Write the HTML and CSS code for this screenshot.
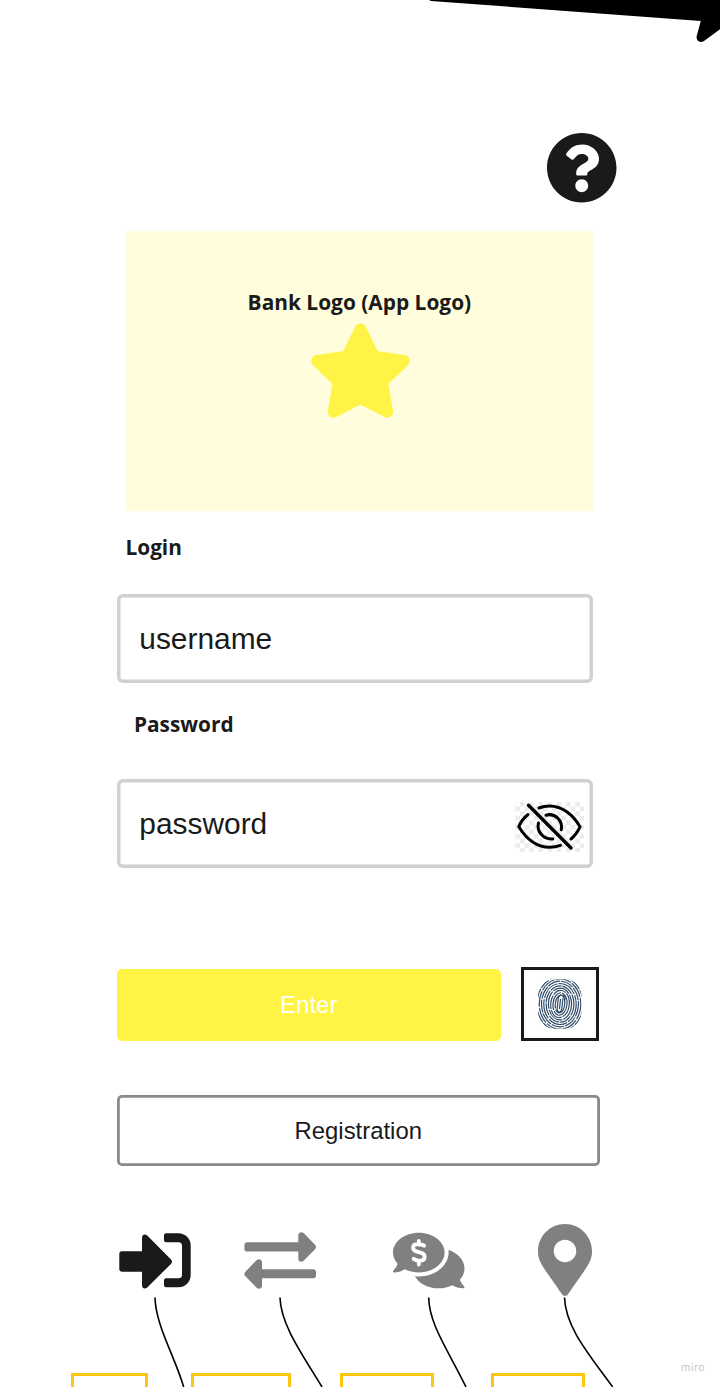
FILE: index.html
```html
<!DOCTYPE html>
<html lang="en">
<head>
<meta charset="utf-8">
<title>Bank login</title>
<link rel="stylesheet" href="styles.css">
</head>
<body>
<div class="board">
  <svg class="big-arrow" viewBox="420 0 300 50" width="300" height="50"><path d="M429 0L431 1L700.8 21L696.7 36C695.8 41 700 43.5 704 41L720 29.3V0Z"/></svg>

  <main class="screen">
    <svg class="help" viewBox="8 8 496 496" width="69.5" height="69.5"><path d="M504 256c0 136.997-111.043 248-248 248S8 392.997 8 256C8 119.083 119.043 8 256 8s248 111.083 248 248zM262.655 90c-54.497 0-89.255 22.957-116.549 63.758-3.536 5.286-2.353 12.415 2.715 16.258l34.699 26.31c5.205 3.947 12.621 3.008 16.665-2.122 17.864-22.658 30.113-35.797 57.303-35.797 20.429 0 45.698 13.148 45.698 32.958 0 14.976-12.363 22.667-32.534 33.976C247.128 238.528 216 254.941 216 296v4c0 6.627 5.373 12 12 12h56c6.627 0 12-5.373 12-12v-1.333c0-28.462 83.186-29.647 83.186-106.667 0-58.002-60.165-102-116.531-102zM256 338c-25.365 0-46 20.635-46 46 0 25.364 20.635 46 46 46s46-20.636 46-46c0-25.365-20.635-46-46-46z"/></svg>

    <section class="logo">
      <h1 class="logo-title">Bank Logo (App Logo)</h1>
      <svg class="star" viewBox="3 -3 576 512" width="106" height="94.2"><path d="M259.3 17.8L194 150.2 47.9 171.5c-26.2 3.8-36.7 36.1-17.7 54.6l105.7 103-25 145.5c-4.5 26.3 23.2 46 46.4 33.7L288 439.6l130.7 68.7c23.2 12.2 50.9-7.4 46.4-33.7l-25-145.5 105.7-103c19-18.5 8.5-50.8-17.7-54.6L382 150.2 316.7 17.8c-11.7-23.6-45.6-23.9-57.4 0z"/></svg>
    </section>

    <div class="label label-login">Login</div>
    <div class="field"><span>username</span></div>
    <div class="label label-password">Password</div>
    <div class="field field-password">
      <span>password</span>
      <svg class="eye" viewBox="515 802 69 50" width="69" height="50">
        <defs><pattern id="checks" x="515.4" y="802" width="9.2" height="9.2" patternUnits="userSpaceOnUse"><path d="M4.6 0h4.6v4.6H4.6zM0 4.6h4.6v4.6H0z" fill="#ececec"/></pattern></defs>
        <rect x="515" y="802" width="69" height="50" fill="url(#checks)"/>
        <g fill="none" stroke="#000" stroke-width="3" stroke-linecap="round">
          <path d="M528 814.5C523.5 818 520.5 822 518.8 826.8C527 840 538 847.3 549.5 847.3C553.5 847.3 557.5 846.6 560.5 845.4"/>
          <path d="M539 808C542.5 806.6 546 806 549.5 806C562 806 573 814.5 580 826.8C577.5 832 574.5 836 571 839"/>
          <path d="M538.4 823C536.5 832 543.5 839.5 552.8 838.9"/>
          <path d="M546 815.2C554.5 812.6 563 820.3 561.3 829.8"/>
          <path d="M528.5 805.3L571 848" stroke-width="3.4"/>
        </g>
      </svg>
    </div>

    <div class="actions">
      <div class="enter">Enter</div>
      <div class="finger">
        <svg viewBox="-22 -25 44 50" width="44" height="50">
          <defs><clipPath id="pad"><rect x="-22" y="-24.7" width="43.5" height="49.5" rx="16" ry="17"/></clipPath></defs>
          <g clip-path="url(#pad)" fill="none" stroke="#2d4a66" stroke-width="1.2">
            <g transform="rotate(6)">
              <path d="M0-5V5M2.3-6V4C2.3 9-2.3 9-2.3 5V-5C-2.3-10 4.6-11 4.6-5"/>
              <ellipse rx="4.7" ry="9" stroke-dasharray="16 1"/>
              <ellipse rx="7" ry="11.3" stroke-dasharray="21 1.2"/>
              <ellipse rx="9.3" ry="13.6" stroke-dasharray="14 1"/>
            </g>
            <ellipse rx="11.6" ry="15.9" stroke-dasharray="18 1.2"/>
            <ellipse rx="13.9" ry="18.2" stroke-dasharray="12 1"/>
            <ellipse rx="16.2" ry="20.5" stroke-dasharray="20 1.2"/>
            <ellipse rx="18.5" ry="22.8" stroke-dasharray="13 1"/>
            <ellipse rx="20.8" ry="25.1" stroke-dasharray="16 1.2"/>
            <ellipse rx="23.1" ry="27.4" stroke-dasharray="11 1"/>
          </g>
        </svg>
      </div>
    </div>
    <div class="register">Registration</div>

    <nav class="tabs">
      <svg class="tab-in" viewBox="119 1224 72 73" width="72" height="73">
        <path d="M122 1251.3H142V1238C142 1234.3 145 1233.3 147.5 1235.8L171 1259.5Q173 1261.7 171 1263.9L147.5 1287.2C145 1289.7 142 1288.7 142 1285V1271.7H122Q119.3 1271.7 119.3 1269V1254Q119.3 1251.3 122 1251.3Z"/>
        <path d="M166 1233.3H178.5A12.2 12.2 0 0 1 190.7 1245.5V1275A12.2 12.2 0 0 1 178.5 1287.2H166Q164 1287.2 164 1285.2V1280.3Q164 1278.3 166 1278.3H178.5Q182 1278.3 182 1274.8V1245.7Q182 1242.2 178.5 1242.2H166Q164 1242.2 164 1240.2V1235.3Q164 1233.3 166 1233.3Z"/>
      </svg>
      <svg class="tab-swap" viewBox="244 1224 73 73" width="73" height="73">
        <path d="M247.3 1242.3H298.3V1235.5C298.3 1232.3 301.5 1231 303.9 1233.3L315 1244.7Q317.2 1247 315 1249.3L303.9 1260.6C301.5 1263 298.3 1261.7 298.3 1258.5V1251.6H247.3Q244.4 1251.6 244.4 1248.7V1245.2Q244.4 1242.3 247.3 1242.3Z"/>
        <path d="M313.2 1269.3H262V1262.5C262 1259.3 258.8 1258 256.5 1260.3L245.4 1271.7Q243.3 1274 245.4 1276.3L256.5 1287.5C258.8 1290 262 1288.7 262 1285.5V1278.3H313.2Q316 1278.3 316 1275.5V1272.1Q316 1269.3 313.2 1269.3Z"/>
      </svg>
      <svg class="tab-chat" viewBox="0 -36 576 584" width="71.5" height="73">
        <path d="M416 192c0-88.4-93.1-160-208-160S0 103.6 0 192c0 34.3 14.1 65.9 38 92-13.4 30.2-35.5 54.2-35.8 54.5-2.2 2.3-2.8 5.7-1.5 8.7S4.8 352 8 352c36.6 0 66.9-12.3 88.7-25 32.2 15.7 70.3 25 111.3 25 114.9 0 208-71.6 208-160zm122 220c23.9-26 38-57.7 38-92 0-66.9-53.5-124.2-129.3-148.1.9 6.6 1.3 13.3 1.3 20.1 0 105.9-107.7 192-240 192-10.8 0-21.3-.8-31.7-1.9C207.8 439.6 281.8 480 368 480c41 0 79.1-9.2 111.3-25 21.8 12.7 52.1 25 88.7 25 3.2 0 6.1-1.9 7.3-4.8 1.3-2.9.7-6.3-1.5-8.7-.3-.2-22.4-24.2-35.8-54.5z"/>
        <path class="dollar" d="M208 98V127M208 259V288M251 136C238 127 224 125 208 125H194C154 125 151 171 187 182L228 194C267 206 262 257 222 257H207C190 257 178 252 166 243"/>
      </svg>
      <svg class="tab-pin" viewBox="0 0 384 512" width="54" height="72"><path d="M172.268 501.67C26.97 291.031 0 269.413 0 192 0 85.961 85.961 0 192 0s192 85.961 192 192c0 77.413-26.97 99.031-172.268 309.67-9.535 13.774-29.93 13.773-39.464 0zM192 272c44.183 0 80-35.817 80-80s-35.817-80-80-80-80 35.817-80 80 35.817 80 80 80z"/></svg>
    </nav>
  </main>

  <div class="notes">
    <div class="note note-in"></div>
    <div class="note note-swap"></div>
    <div class="note note-chat"></div>
    <div class="note note-pin"></div>
  </div>

  <svg class="links" viewBox="0 1290 720 97" width="720" height="97">
    <path d="M155 1297.5C155.5 1325 175 1357 183.7 1387"/>
    <path d="M280 1297.5C280.5 1324 302 1354 322 1387"/>
    <path d="M428.7 1297.5C429 1324 448 1350 466 1387"/>
    <path d="M564.5 1297.5C565.5 1327 588 1353 612.7 1387"/>
  </svg>
  <div class="brand">miro</div>
</div>
</body>
</html>
```
FILE: styles.css
```css
* { box-sizing: border-box; }
body { margin: 0; background: #fff; }
svg { display: block; flex: none; overflow: visible; }

.board {
  position: relative;
  display: flex;
  flex-direction: column;
  width: 720px;
  height: 1387px;
  overflow: hidden;
  color: #1a1a1a;
  font-family: "Liberation Sans", Arial, sans-serif;
}
.big-arrow { position: absolute; top: 0; right: 0; }

.screen {
  display: flex;
  flex-direction: column;
  height: 1373px;
  flex: none;
  padding: 133px 120px 0 117px;
}
.help { margin-left: 429.6px; fill: #1a1a1a; }

.logo {
  display: flex;
  flex-direction: column;
  align-items: center;
  width: 468px;
  height: 280px;
  margin: 28.9px 0 0 8.4px;
  padding-top: 57px;
  background: #fffddb;
}
.logo-title {
  margin: 0;
  font: bold 20.9px/28px "Open Sans", sans-serif;
  white-space: nowrap;
}
.star { margin: 7px 0 0 2.4px; fill: #fff445; }

.label { font: bold 20.8px/28px "Open Sans", sans-serif; }
.label-login { margin: 21.5px 0 0 8.5px; }
.label-password { margin: 27px 0 0 17px; }

.field {
  display: flex;
  align-items: center;
  flex: none;
  width: 476px;
  height: 89px;
  margin-top: 33.5px;
  padding: 0 9.5px 0 22.3px;
  border-radius: 6px;
  box-shadow: inset 0 0 0 3.5px #d0d0d0;
  font-size: 29.9px;
}
.field-password { justify-content: space-between; margin-top: 40.6px; padding-top: 1px; }
.eye { margin-top: 6px; }

.actions { display: flex; justify-content: space-between; margin-top: 99px; width: 482px; height: 74px; }
.enter {
  display: flex;
  align-items: center;
  justify-content: center;
  width: 383.5px;
  height: 72px;
  margin-top: 2px;
  border-radius: 5px;
  background: #fff445;
  color: #fff;
  font-size: 24px;
}
.finger {
  display: flex;
  align-items: center;
  justify-content: center;
  width: 78px;
  height: 74px;
  padding-right: 1px;
  border: 3px solid #1a1a1a;
}
.register {
  display: flex;
  align-items: center;
  justify-content: center;
  flex: none;
  width: 482.5px;
  height: 71px;
  margin-top: 54px;
  padding-top: 1px;
  border-radius: 5px;
  box-shadow: inset 0 0 0 2.8px #8a8a8a;
  font-size: 23.9px;
}

.tabs { display: flex; margin: 57.8px 0 0 2px; fill: #808080; }
.tab-in { fill: #1a1a1a; }
.tab-swap { margin-left: 53px; }
.tab-chat { margin-left: 76px; }
.tab-pin { margin-left: 73px; }
.dollar { fill: none; stroke: #fff; stroke-width: 31; stroke-linecap: round; stroke-linejoin: round; }

.notes { display: flex; flex: none; height: 14px; padding-left: 70.5px; }
.note { flex: none; border: 3px solid #fac710; border-bottom: 0; }
.note-in { width: 77.5px; }
.note-swap { width: 100.5px; margin-left: 42.5px; }
.note-chat { width: 94px; margin-left: 48.5px; }
.note-pin { width: 94px; margin-left: 57px; }

.links { position: absolute; left: 0; bottom: 0; fill: none; stroke: #000; stroke-width: 1.6; }
.brand {
  position: absolute;
  right: 15px;
  bottom: 12px;
  color: #c3c2cf;
  font: 10.3px/15px "Noto Sans", sans-serif;
  letter-spacing: .4px;
}
```
